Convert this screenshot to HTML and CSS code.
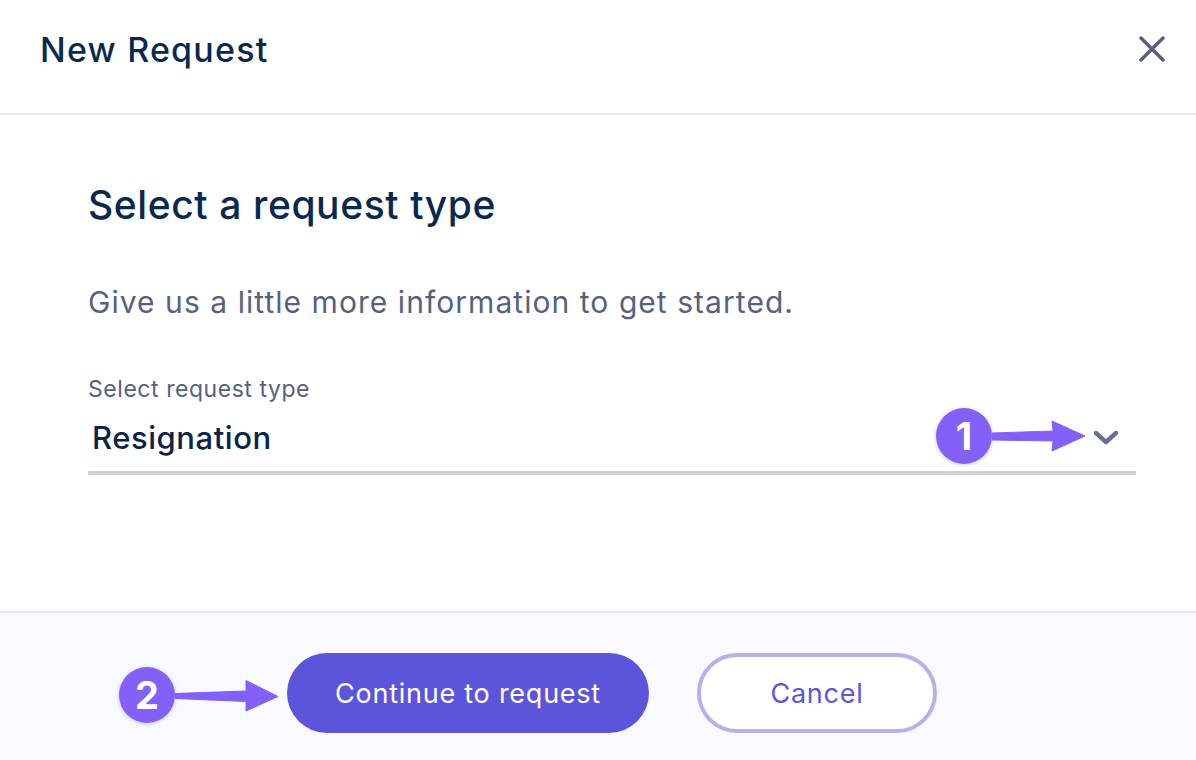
FILE: index.html
```html
<!DOCTYPE html>
<html lang="en">
<head>
<meta charset="utf-8">
<title>New Request</title>
<link rel="stylesheet" href="styles.css">
</head>
<body>
<div class="modal">
  <header class="head">
    <h1 class="title">New Request</h1>
    <svg class="close" width="26" height="26" viewBox="0 0 26 26"><path d="M2 2 L24 24 M24 2 L2 24" fill="none" stroke="#56607e" stroke-width="3.4" stroke-linecap="round"/></svg>
  </header>
  <main class="body">
    <h2 class="heading">Select a request type</h2>
    <p class="desc">Give us a little more information to get started.</p>
    <div class="field">
      <div class="label">Select request type</div>
      <div class="select">
        <span class="value">Resignation</span>
        <svg class="chev" width="24" height="14" viewBox="0 0 24 14"><path d="M2 2 L12 11 L22 2" fill="none" stroke="#64738f" stroke-width="4.4" stroke-linecap="round" stroke-linejoin="round"/></svg>
        <div class="callout callout-one">
          <span class="badge">1</span>
          <svg class="arrow" width="100" height="34" viewBox="0 0 100 34"><path d="M0 14 L61 12 L60 2 L93 17 L60 32 L61 22 L0 21 Z" fill="#8360f7" stroke="#8360f7" stroke-width="1" stroke-linejoin="round"/></svg>
        </div>
      </div>
    </div>
  </main>
  <footer class="foot">
    <div class="callout callout-two">
      <span class="badge">2</span>
      <svg class="arrow" width="110" height="34" viewBox="0 0 110 34"><path d="M0 15.5 L71 13 L71 2.5 L103 18.5 L71 33 L71 23.5 L0 20.5 Z" fill="#8360f7" stroke="#8360f7" stroke-width="1" stroke-linejoin="round"/></svg>
    </div>
    <button class="btn primary">Continue to request</button>
    <button class="btn secondary">Cancel</button>
  </footer>
</div>
</body>
</html>
```

FILE: styles.css
```css
* { box-sizing: border-box; }
html, body { margin: 0; padding: 0; }
body {
  width: 1196px;
  height: 760px;
  overflow: hidden;
  background: #fff;
  font-family: Inter, "Liberation Sans", sans-serif;
}
.modal { display: flex; flex-direction: column; height: 760px; }
.head {
  height: 115px;
  display: flex;
  justify-content: space-between;
  align-items: flex-start;
  padding: 28px 31px 0 40px;
  border-bottom: 2px solid #e4e7ec;
}
.title {
  margin: 0;
  font-size: 34px;
  line-height: 44px;
  font-weight: 500;
  letter-spacing: 1.2px;
  color: #0a2950;
}
.close { margin-top: 8px; }
.body { height: 496px; padding: 66px 60px 0 88px; }
.heading {
  margin: 0;
  font-size: 39px;
  line-height: 48px;
  font-weight: 500;
  letter-spacing: .6px;
  color: #0a2950;
}
.desc {
  margin: 53px 0 0;
  font-size: 30px;
  line-height: 40px;
  letter-spacing: 1.05px;
  color: #56617f;
}
.field { margin-top: 53px; }
.label { font-size: 23px; line-height: 28px; letter-spacing: .55px; color: #56617f; }
.select {
  position: relative;
  height: 72px;
  display: flex;
  align-items: center;
  justify-content: space-between;
  padding: 1px 18px 0 4px;
  border-bottom: 4px solid #cbd2da;
}
.value { font-size: 31px; font-weight: 500; letter-spacing: .55px; color: #0a2348; }
.callout { position: absolute; display: flex; align-items: center; }
.callout-one { left: 848px; top: 5px; }
.badge {
  flex: none;
  width: 56px;
  height: 56px;
  border-radius: 50%;
  background: #8360f7;
  color: #fff;
  font-size: 38px;
  font-weight: 700;
  display: flex;
  align-items: center;
  justify-content: center;
  box-shadow: 0 1px 4px rgba(60, 40, 140, .25);
}
.arrow { flex: none; }
.foot {
  position: relative;
  flex: 1;
  display: flex;
  align-items: center;
  gap: 48px;
  padding: 12px 0 0 287px;
  background: #f9faff;
  border-top: 2px solid #e4e7ec;
}
.callout-two { left: 119px; top: 54px; }
.btn {
  height: 80px;
  border-radius: 40px;
  font-family: inherit;
  font-size: 27px;
  font-weight: 400;
  letter-spacing: .75px;
  padding: 2px 0 0;
}
.primary {
  width: 362px;
  border: 0;
  background: #5c55db;
  color: #fff;
}
.secondary {
  width: 240px;
  border: 4px solid #b8b0ea;
  background: #fff;
  color: #5c55db;
}
```
